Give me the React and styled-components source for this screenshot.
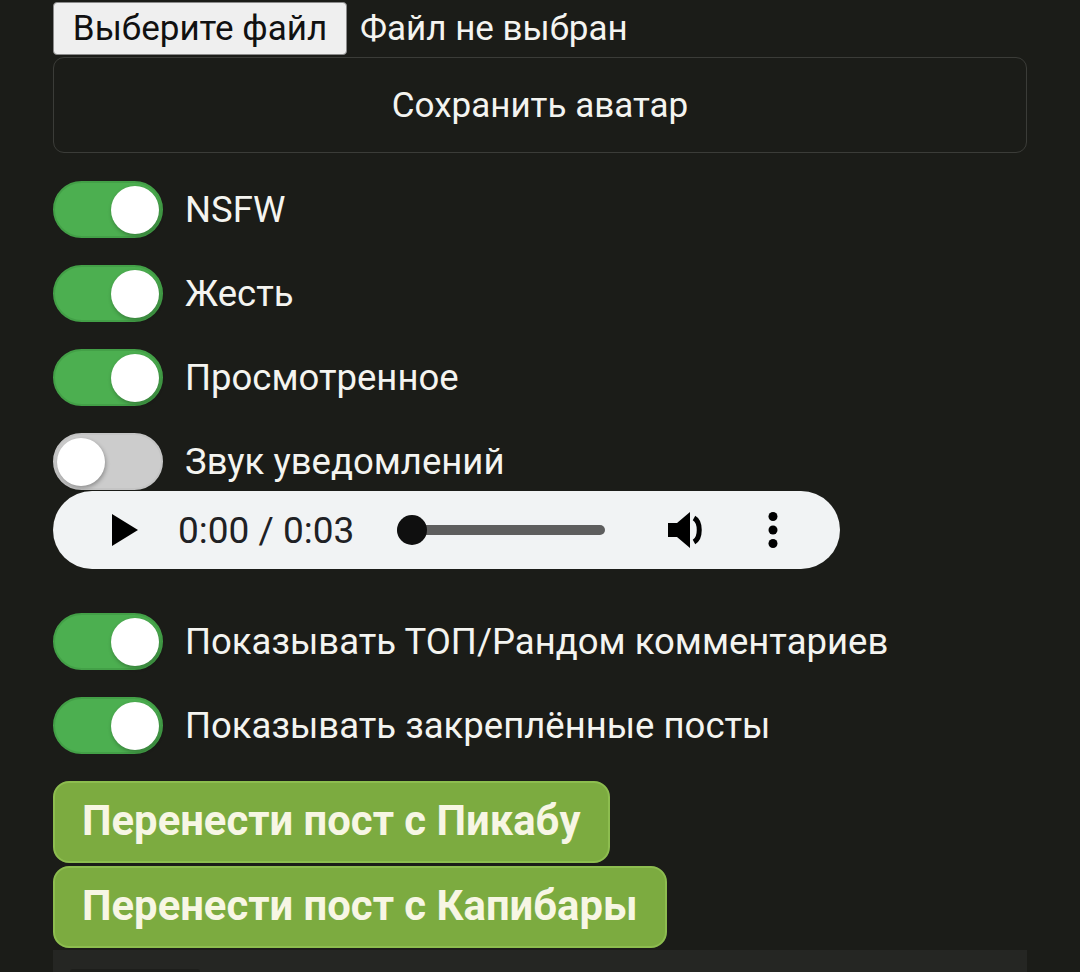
import React from "react";
import styled, { createGlobalStyle } from "styled-components";

const Global = createGlobalStyle`
  html, body { margin: 0; padding: 0; background: #1b1c18; }
  body { font-family: Roboto, "Noto Sans", sans-serif; color: #f4f4f0; }
`;

const Page = styled.div`
  width: 974px;
  padding: 2px 0 0 53px;
  display: flex;
  flex-direction: column;
  align-items: flex-start;
`;

const FileRow = styled.div`
  display: flex;
  align-items: center;
  gap: 13px;
  height: 53px;
`;

const FileButton = styled.button`
  height: 53px;
  width: 294px;
  box-sizing: border-box;
  background: #efefef;
  border: 1px solid #8a8a8a;
  border-radius: 4px;
  font-family: Roboto, sans-serif;
  font-size: 35px;
  color: #111;
  padding: 0;
  white-space: nowrap;
`;

const FileText = styled.span`
  font-size: 35px;
  color: #f4f4f0;
`;

const SaveButton = styled.button`
  margin-top: 2px;
  width: 974px;
  height: 96px;
  box-sizing: border-box;
  background: transparent;
  border: 1px solid #3b3c38;
  border-radius: 11px;
  color: #f4f4f0;
  font-family: Roboto, sans-serif;
  font-size: 35px;
`;

const ToggleRow = styled.label`
  display: flex;
  align-items: center;
  gap: 22px;
  height: 57px;
  margin-top: ${(p) => p.$mt}px;
`;

const Track = styled.span`
  position: relative;
  width: 110px;
  height: 57px;
  box-sizing: border-box;
  border-radius: 29px;
  background: ${(p) => (p.$on ? "#4caf50" : "#cccccc")};
  border: 2px solid ${(p) => (p.$on ? "#43a047" : "#c4c4c4")};
  flex-shrink: 0;
`;

const Knob = styled.span`
  position: absolute;
  top: 2.5px;
  ${(p) => (p.$on ? "right: 2px;" : "left: 2px;")}
  width: 48px;
  height: 48px;
  border-radius: 50%;
  background: #ffffff;
  box-shadow: 1px 2px 4px rgba(0, 0, 0, 0.3);
`;

const Label = styled.span`
  font-size: 36.5px;
  color: #f4f4f0;
  white-space: nowrap;
`;

const Player = styled.div`
  margin-top: 1px;
  width: 787px;
  height: 78px;
  border-radius: 39px;
  background: #f1f3f4;
  display: flex;
  align-items: center;
  box-sizing: border-box;
  padding-left: 59px;
`;

const Time = styled.span`
  font-size: 37px;
  color: #202124;
  margin-left: 40px;
  white-space: nowrap;
`;

const Slider = styled.div`
  position: relative;
  margin-left: 43px;
  width: 208px;
  height: 10px;
  border-radius: 5px;
  background: #5e5e5e;
`;

const Thumb = styled.span`
  position: absolute;
  left: 0;
  top: 50%;
  width: 30px;
  height: 30px;
  margin-top: -15px;
  border-radius: 50%;
  background: #0f0f0f;
`;

const IconWrap = styled.span`
  display: flex;
  margin-left: ${(p) => p.$ml}px;
`;

const GreenButton = styled.button`
  margin-top: ${(p) => p.$mt}px;
  height: 82px;
  box-sizing: border-box;
  padding: 0 27px 4px 27px;
  background: #7cab40;
  border: 2px solid #8dbd4f;
  border-radius: 16px;
  color: #f7f6e4;
  font-family: Roboto, sans-serif;
  font-weight: 700;
  font-size: 41.8px;
  white-space: nowrap;
`;

const BottomPanel = styled.div`
  margin-top: 2px;
  width: 974px;
  height: 40px;
  background: #252623;
  padding: 19px 0 0 17px;
  box-sizing: border-box;
`;

const BottomInner = styled.div`
  width: 130px;
  height: 20px;
  background: #1d1e1b;
  border-radius: 3px;
`;

const Toggle = ({ on, label, mt }) => (
  <ToggleRow $mt={mt}>
    <Track $on={on}>
      <Knob $on={on} />
    </Track>
    <Label>{label}</Label>
  </ToggleRow>
);

export default function App() {
  return (
    <>
      <Global />
      <Page>
        <FileRow>
          <FileButton>Выберите файл</FileButton>
          <FileText>Файл не выбран</FileText>
        </FileRow>
        <SaveButton>Сохранить аватар</SaveButton>
        <Toggle on label="NSFW" mt={28} />
        <Toggle on label="Жесть" mt={27} />
        <Toggle on label="Просмотренное" mt={27} />
        <Toggle on={false} label="Звук уведомлений" mt={27} />
        <Player>
          <svg width="26" height="32" viewBox="0 0 26 32">
            <path d="M0 0 L26 16 L0 32 Z" fill="#000" />
          </svg>
          <Time>0:00 / 0:03</Time>
          <Slider>
            <Thumb />
          </Slider>
          <IconWrap $ml={63}>
            <svg width="42" height="40" viewBox="0 0 42 40">
              <path d="M0 13 H9 L22 2 V38 L9 27 H0 Z" fill="#000" />
              <path d="M26 8 C33 12 33 28 26 32" stroke="#000" strokeWidth="5" fill="none" />
            </svg>
          </IconWrap>
          <IconWrap $ml={58}>
            <svg width="10" height="36" viewBox="0 0 10 36">
              <circle cx="5" cy="4.5" r="4.5" fill="#000" />
              <circle cx="5" cy="18" r="4.5" fill="#000" />
              <circle cx="5" cy="31.5" r="4.5" fill="#000" />
            </svg>
          </IconWrap>
        </Player>
        <Toggle on label="Показывать ТОП/Рандом комментариев" mt={44} />
        <Toggle on label="Показывать закреплённые посты" mt={27} />
        <GreenButton $mt={27}>Перенести пост с Пикабу</GreenButton>
        <GreenButton $mt={3}>Перенести пост с Капибары</GreenButton>
        <BottomPanel>
          <BottomInner />
        </BottomPanel>
      </Page>
    </>
  );
}
